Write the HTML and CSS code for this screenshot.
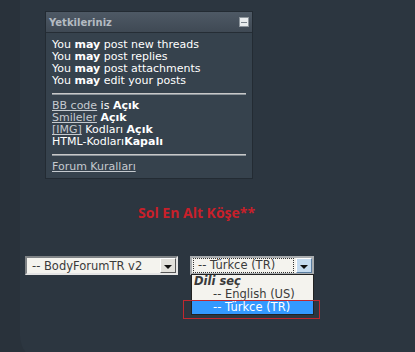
FILE: index.html
```html
<!DOCTYPE html>
<html lang="tr">
<head>
  <meta charset="UTF-8" />
  <title>Yetkileriniz</title>
  <link rel="stylesheet" href="styles.css">
</head>
<body>
  <div class="page">
    <div class="side"></div>
    <div class="main">
      <div class="perm-box">
        <div class="perm-head">
          <span>Yetkileriniz</span>
          <span class="collapse"><i></i></span>
        </div>
        <div class="perm-body">
          <div>You <b>may</b> post new threads</div>
          <div>You <b>may</b> post replies</div>
          <div>You <b>may</b> post attachments</div>
          <div>You <b>may</b> edit your posts</div>
          <hr>
          <div><a href="#">BB code</a> is <b>Açık</b></div>
          <div><a href="#">Smileler</a> <b>Açık</b></div>
          <div><a href="#">[IMG]</a> Kodları <b>Açık</b></div>
          <div>HTML-Kodları<b>Kapalı</b></div>
          <hr>
          <div><a href="#">Forum Kuralları</a></div>
        </div>
      </div>

      <div class="caption">Sol En Alt Köşe**</div>

      <div class="selects">
        <div class="fake-select style-select">
          <span class="value">-- BodyForumTR v2</span>
          <span class="arrow"><i></i></span>
        </div>
        <div class="lang-wrap">
          <div class="fake-select lang-select">
            <span class="value focused">-- Türkce (TR)</span>
            <span class="arrow hot"><i></i></span>
          </div>
          <div class="dropdown">
            <div class="group">Dili seç</div>
            <div class="opt">-- English (US)</div>
            <div class="opt selected">-- Türkce (TR)</div>
          </div>
          <div class="mark"></div>
        </div>
      </div>
    </div>
  </div>
</body>
</html>
```

FILE: styles.css
```css
* {
  box-sizing: border-box;
}

body {
  margin: 0;
  background: #29323b;
  font-family: "DejaVu Sans", Verdana, sans-serif;
  overflow: hidden;
}

.page {
  display: flex;
  height: 352px;
  overflow: hidden;
}

.side {
  width: 20px;
  background: #29323b;
}

.main {
  flex: 1;
  height: 362px;
  background: #2c3640;
  border-bottom-left-radius: 26px;
  padding-top: 11px;
}

/* permissions box */
.perm-box {
  margin-left: 25px;
  width: 208px;
  background: #36424d;
  border: 1px solid #232b33;
}

.perm-head {
  height: 21px;
  display: flex;
  justify-content: space-between;
  align-items: center;
  padding: 0 3px 0 3px;
  background: linear-gradient(#4e5965, #3f4954);
  border-bottom: 1px solid #252d35;
  color: #b4bbc2;
  font-size: 10px;
  font-weight: bold;
}

.collapse {
  width: 10px;
  height: 10px;
  background: #e9ecee;
  border: 1px solid #8d959c;
  display: flex;
  align-items: center;
  justify-content: center;
}

.collapse i {
  width: 6px;
  height: 1px;
  background: #7a838b;
}

.perm-body {
  padding: 6px 6px 5px 6px;
  color: #ffffff;
  font-size: 11px;
  line-height: 12px;
}

.perm-body a {
  color: #c5cacf;
}

.perm-body hr {
  margin: 6px 0 5px;
  border: none;
  height: 2px;
  background: #c8c8c8;
  border-bottom: 1px solid #8a9299;
}

/* red caption */
.caption {
  margin-top: 24px;
  margin-left: 118px;
  color: #c8202a;
  font-family: "Open Sans", sans-serif;
  font-weight: bold;
  font-size: 14px;
}

/* select boxes */
.selects {
  display: flex;
  align-items: flex-start;
  gap: 12px;
  margin-top: 34px;
  margin-left: 5px;
}

.fake-select {
  height: 19px;
  display: flex;
  align-items: center;
  background: #f4f3ee;
  border: 2px solid;
  border-color: #7f8386 #e4e4e4 #e4e4e4 #7f8386;
  font-size: 11.5px;
  color: #3a3a3a;
}

.style-select {
  width: 153px;
}

.lang-select {
  width: 124px;
  border-color: #a9adb0;
}

.value {
  flex: 1;
  padding-left: 5px;
  white-space: nowrap;
}

.value.focused {
  margin: 1px 2px 1px 1px;
  height: 15px;
  line-height: 13px;
  padding-left: 4px;
  border: 1px dotted #333;
}

.arrow {
  width: 16px;
  height: 15px;
  background: #e2e1dc;
  border: 1px solid;
  border-color: #ffffff #555 #555 #ffffff;
  display: flex;
  align-items: center;
  justify-content: center;
}

.arrow.hot {
  background: #c6dcf0;
  border-color: #ffffff #5a7da0 #5a7da0 #ffffff;
}

.arrow i {
  margin-top: 2px;
  border-left: 4px solid transparent;
  border-right: 4px solid transparent;
  border-top: 4px solid #111;
}

.lang-wrap {
  position: relative;
}

.dropdown {
  position: absolute;
  top: 18px;
  left: 1px;
  width: 123px;
  background: #f4f3ee;
  border: 1px solid #222;
  font-size: 11.5px;
  line-height: 13px;
  color: #3a3a3a;
}

.group {
  padding-left: 2px;
  font-weight: bold;
  font-style: italic;
}

.opt {
  padding-left: 21px;
}

.opt.selected {
  background: #3399ff;
  color: #ffffff;
}

.mark {
  position: absolute;
  left: -7px;
  top: 44px;
  width: 137px;
  height: 19px;
  border: 1px solid #c0282f;
}
```
